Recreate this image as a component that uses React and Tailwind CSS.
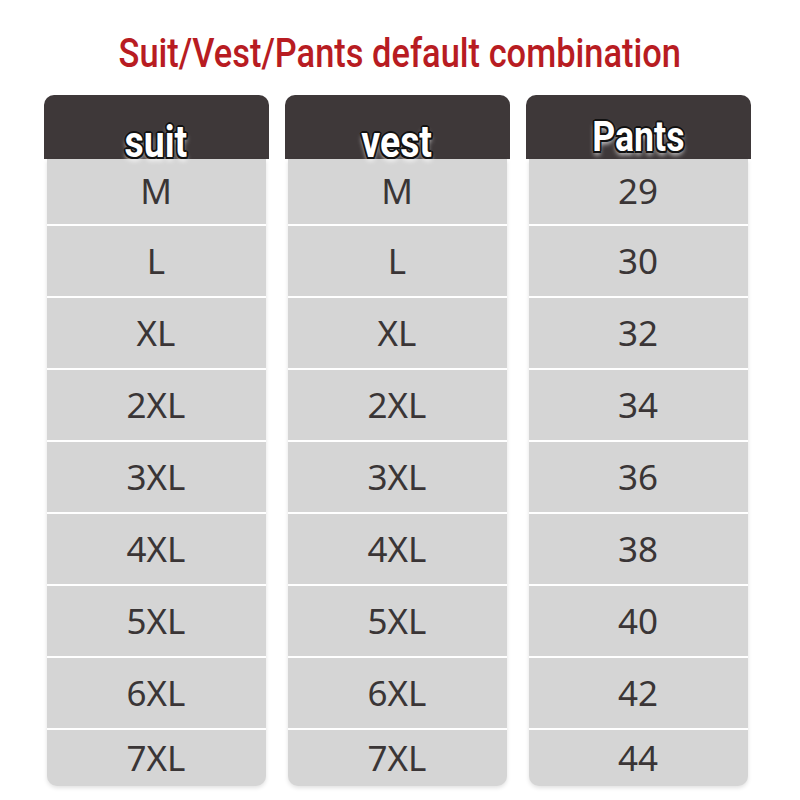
import React from 'react';

const columns = [
  { title: 'suit', titleClass: 'text-[44px] translate-y-[5px]', sizes: ['M', 'L', 'XL', '2XL', '3XL', '4XL', '5XL', '6XL', '7XL'] },
  { title: 'vest', titleClass: 'text-[44px] translate-y-[5px]', sizes: ['M', 'L', 'XL', '2XL', '3XL', '4XL', '5XL', '6XL', '7XL'] },
  { title: 'Pants', titleClass: 'text-[42px] translate-y-[-1px]', sizes: ['29', '30', '32', '34', '36', '38', '40', '42', '44'] },
];

const outline =
  '[text-shadow:-1.5px_-1.5px_0_#111,1.5px_-1.5px_0_#111,-1.5px_1.5px_0_#111,1.5px_1.5px_0_#111,0_-2px_0_#111,0_2px_0_#111,-2px_0_0_#111,2px_0_0_#111,0_4px_6px_rgba(255,255,255,0.8)]';

const SizeColumn = ({ title, titleClass, sizes }) => (
  <div className="flex flex-col w-[225px]">
    <div className="h-[64px] bg-[#3e3839] rounded-t-[10px] flex items-end justify-center">
      <span
        className={`inline-block text-white font-bold leading-none scale-x-[0.85] ${titleClass} ${outline} [font-family:Roboto,sans-serif]`}
      >
        {title}
      </span>
    </div>
    <div className="mx-[3px] bg-[#d5d5d5] rounded-b-[10px] shadow-[0_2px_4px_rgba(0,0,0,0.12)] flex flex-col">
      {sizes.map((s, i) => (
        <div
          key={s}
          className={`flex items-center justify-center text-[35px] text-[#3a3536] [font-family:'Noto_Sans',sans-serif] ${
            i === 0 ? 'h-[65px]' : i === sizes.length - 1 ? 'h-[58px] border-t-2 border-white' : 'h-[72px] border-t-2 border-white'
          }`}
        >
          {s}
        </div>
      ))}
    </div>
  </div>
);

export default function App() {
  return (
    <div className="w-[800px] h-[800px] bg-white flex flex-col items-center">
      <h1 className="mt-[33px] h-[62px] inline-block scale-x-[0.84] text-[#b81c22] text-[41px] font-medium leading-none [font-family:Roboto,sans-serif] whitespace-nowrap">
        Suit/Vest/Pants default combination
      </h1>
      <div className="flex gap-[16px] ml-[-6px]">
        {columns.map(c => (
          <SizeColumn key={c.title} {...c} />
        ))}
      </div>
    </div>
  );
}
